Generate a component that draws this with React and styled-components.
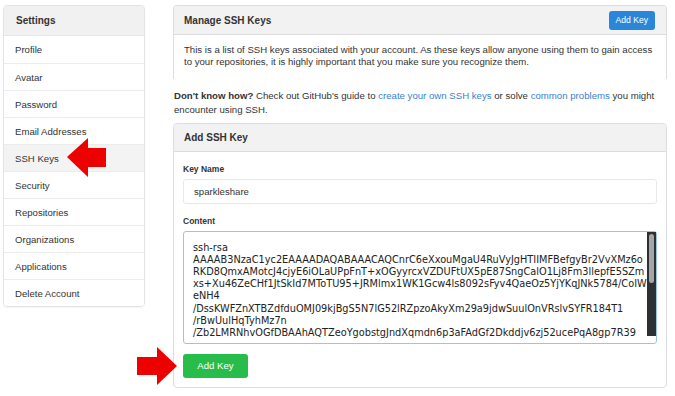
import React from "react";
import styled, { createGlobalStyle } from "styled-components";

const Global = createGlobalStyle`
  html, body { margin: 0; padding: 0; background: #fff; }
  body { font-family: "Liberation Sans", Arial, sans-serif; color: #333; font-size: 9.5px; }
  * { box-sizing: border-box; }
`;

const Page = styled.div`
  position: relative;
  display: flex;
  align-items: flex-start;
  gap: 28px;
  padding: 5px 8px 0 3px;
  width: 675px;
  height: 396px;
  overflow: hidden;
`;

const Sidebar = styled.nav`
  width: 142px;
  flex: none;
  border: 1px solid #e3e3e3;
  border-radius: 4px;
  overflow: hidden;
  box-shadow: 0 1px 1px rgba(0,0,0,0.04);
`;

const SideHeader = styled.div`
  height: 30px;
  display: flex;
  align-items: center;
  padding-left: 12px;
  background: #f1f1f1;
  font-weight: bold;
  font-size: 10px;
  color: #333;
  border-bottom: 1px solid #e6e6e6;
`;

const SideItem = styled.div`
  height: 27px;
  display: flex;
  align-items: center;
  padding-left: 11px;
  font-size: 9.6px;
  color: #333;
  background: ${p => (p.$active ? "#f3f3f3" : "#fff")};
  border-top: ${p => (p.$first ? "none" : "1px solid #ececec")};
`;

const Main = styled.main`
  width: 494px;
  flex: none;
  display: flex;
  flex-direction: column;
`;

const Panel = styled.section`
  border: 1px solid #dedede;
  border-radius: 4px;
  overflow: hidden;
  ${p => p.$open && "border-bottom: none; border-bottom-left-radius: 0; border-bottom-right-radius: 0;"}
`;

const PanelHeader = styled.div`
  height: ${p => p.$h || 29}px;
  display: flex;
  align-items: center;
  justify-content: space-between;
  padding: 0 11px 0 10px;
  background: #f2f2f2;
  border-bottom: 1px solid #dcdcdc;
`;

const PanelTitle = styled.h3`
  margin: 0;
  font-size: 10px;
  font-weight: bold;
  color: #333;
`;

const BlueButton = styled.button`
  height: 19px;
  padding: 0 7px;
  border: none;
  border-radius: 3px;
  background: #2a86d9;
  color: #fff;
  font-family: inherit;
  font-size: 8.6px;
`;

const PanelBody = styled.div`
  padding: ${p => p.$pad || "9px 10px 10px 10px"};
  font-size: 9.6px;
  line-height: 12.3px;
`;

const Help = styled.p`
  margin: 10px 0 0 1px;
  font-size: 9.65px;
  line-height: 14px;
  height: 34px;
  strong { font-weight: bold; color: #333; }
  a { color: #3b7fd0; text-decoration: none; }
`;

const Label = styled.label`
  display: block;
  font-size: 8.5px;
  line-height: 10px;
  font-weight: bold;
  color: #333;
  margin: ${p => p.$mt || 0}px 0 5px 0;
`;

const Input = styled.input`
  display: block;
  width: 474px;
  height: 25px;
  border: 1px solid #e8e8e8;
  border-radius: 3px;
  padding: 0 10px;
  font-family: "Liberation Sans", Arial, sans-serif;
  font-size: 9.6px;
  color: #333;
  outline: none;
`;

const AreaWrap = styled.div`
  position: relative;
  width: 474px;
  height: 113px;
`;

const TextArea = styled.textarea`
  display: block;
  width: 100%;
  height: 100%;
  border: 1px solid #9cc4e8;
  border-radius: 3px;
  padding: 10px 14px 0 9px;
  margin: 0;
  resize: none;
  font-family: "DejaVu Sans", sans-serif;
  font-size: 9.75px;
  line-height: 12.2px;
  color: #222;
  outline: none;
  white-space: pre;
  overflow: hidden;
`;

const ScrollTrack = styled.div`
  position: absolute;
  top: 1px;
  right: 1px;
  width: 9px;
  height: 104px;
  background: #2e3133;
`;

const ScrollThumb = styled.div`
  position: absolute;
  top: 2px;
  left: 2px;
  width: 5px;
  height: 49px;
  border-radius: 3px;
  background: #a6a6a6;
`;

const GreenButton = styled.button`
  display: block;
  margin-top: 10px;
  width: 65px;
  height: 24px;
  border: none;
  border-radius: 3px;
  background: #28bd4a;
  color: #fff;
  font-family: "Liberation Sans", Arial, sans-serif;
  font-size: 9.6px;
`;

const Arrow = styled.svg`
  position: absolute;
  left: ${p => p.$x}px;
  top: ${p => p.$y}px;
  pointer-events: none;
`;

const items = [
  "Profile", "Avatar", "Password", "Email Addresses", "SSH Keys",
  "Security", "Repositories", "Organizations", "Applications", "Delete Account",
];

const keyText = [
  "ssh-rsa",
  "AAAAB3NzaC1yc2EAAAADAQABAAACAQCnrC6eXxouMgaU4RuVyJgHTIIMFBefgyBr2VvXMz6o",
  "RKD8QmxAMotcJ4cjyE6iOLaUPpFnT+xOGyyrcxVZDUFtUX5pE87SngCalO1Lj8Fm3llepfE5SZm",
  "xs+Xu46ZeCHf1JtSkId7MToTU95+JRMlmx1WK1Gcw4ls8092sFyv4QaeOz5YjYKqJNk5784/CoIW",
  "eNH4",
  "/DssKWFZnXTBZdfduOMJ09kjBgS5N7lG52lRZpzoAkyXm29a9jdwSuulOnVRslvSYFR184T1",
  "/rBwUulHqTyhMz7n",
  "/Zb2LMRNhvOGfDBAAhAQTZeoYgobstgJndXqmdn6p3aFAdGf2Dkddjv6zj52ucePqA8gp7R39",
].join("\n");

export default function App() {
  return (
    <>
      <Global />
      <Page>
        <Sidebar>
          <SideHeader>Settings</SideHeader>
          {items.map((t, i) => (
            <SideItem key={t} $first={i === 0} $active={t === "SSH Keys"}>{t}</SideItem>
          ))}
        </Sidebar>
        <Main>
          <Panel $open>
            <PanelHeader>
              <PanelTitle>Manage SSH Keys</PanelTitle>
              <BlueButton>Add Key</BlueButton>
            </PanelHeader>
            <PanelBody $pad="9px 10px 10px 10px">
              This is a list of SSH keys associated with your account. As these keys allow anyone using them to gain access
              to your repositories, it is highly important that you make sure you recognize them.
            </PanelBody>
          </Panel>
          <Help>
            <strong>Don't know how?</strong> Check out GitHub's guide to <a href="#">create your own SSH keys</a> or solve <a href="#">common problems</a> you might
            encounter using SSH.
          </Help>
          <Panel>
            <PanelHeader $h={28}>
              <PanelTitle>Add SSH Key</PanelTitle>
            </PanelHeader>
            <PanelBody $pad="12px 9px 9px 9px">
              <Label>Key Name</Label>
              <Input defaultValue="sparkleshare" />
              <Label $mt={12}>Content</Label>
              <AreaWrap>
                <TextArea defaultValue={keyText} spellCheck={false} />
                <ScrollTrack>
                  <ScrollThumb />
                </ScrollTrack>
              </AreaWrap>
              <GreenButton>Add Key</GreenButton>
            </PanelBody>
          </Panel>
        </Main>
        <Arrow $x={66} $y={137} width="42" height="42" viewBox="0 0 42 42">
          <polygon points="1,20 22,1 22,11 40,11 40,30 22,30 22,40" fill="#ec0000" />
        </Arrow>
        <Arrow $x={136} $y={346} width="42" height="42" viewBox="0 0 42 42">
          <polygon points="41,20 21,1 21,11 1,11 1,29 21,29 21,39" fill="#ec0000" />
        </Arrow>
      </Page>
    </>
  );
}
